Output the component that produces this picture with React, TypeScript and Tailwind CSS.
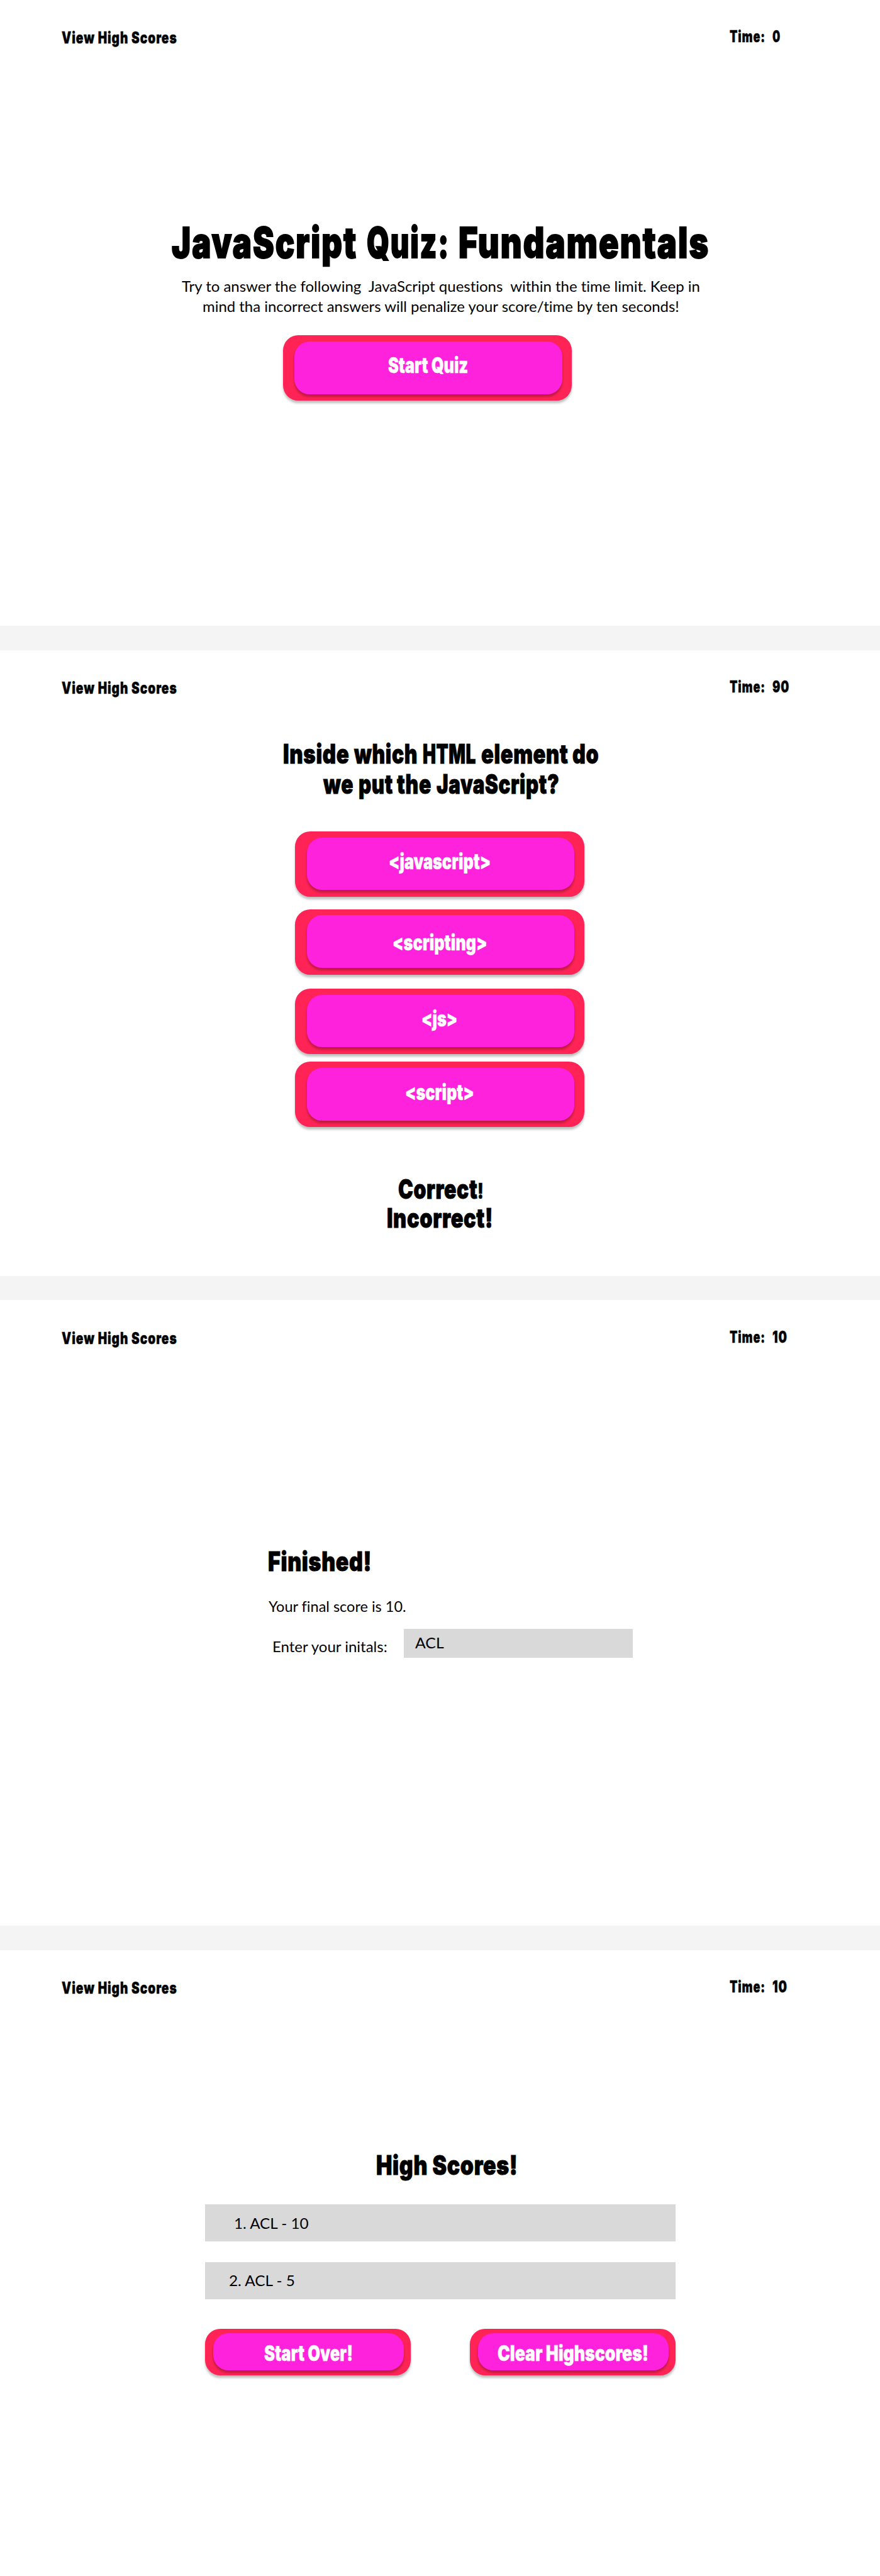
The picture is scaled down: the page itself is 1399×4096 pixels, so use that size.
import { useLayoutEffect, useRef } from 'react';
import type { ReactNode } from 'react';

/* One line of text, condensed horizontally so that it fills its box's width. */
function Fit({ className, children }: { className: string; children: ReactNode }) {
  const box = useRef<HTMLDivElement>(null);
  const line = useRef<HTMLSpanElement>(null);
  useLayoutEffect(() => {
    const outer = box.current;
    const inner = line.current;
    if (!outer || !inner) return;
    const fit = () => {
      inner.style.transform = 'none';
      const ratio = outer.getBoundingClientRect().width / inner.getBoundingClientRect().width;
      inner.style.transform = `scaleX(${ratio})`;
    };
    fit();
    const observer = new ResizeObserver(fit);
    observer.observe(outer);
    observer.observe(inner);
    return () => observer.disconnect();
  }, []);
  return (
    <div ref={box} className={`shrink-0 ${className}`}>
      <span ref={line} className="inline-block origin-left whitespace-pre align-top">
        {children}
      </span>
    </div>
  );
}

const heavy = "font-['Inter',sans-serif] font-black";
const h24 = `${heavy} h-[30px] text-[26px] leading-[30px] tracking-[0.05em] [-webkit-text-stroke:0.5px_currentColor]`;
const h32 = `${heavy} h-[36px] text-[34.8px] leading-[36px] [-webkit-text-stroke:0.5px_currentColor]`;
const h40 = `${heavy} h-[48px] text-[43.4px] leading-[48px] tracking-[0.02em] [-webkit-text-stroke:1px_currentColor]`;
const h64 = `${heavy} h-[70px] text-[69.5px] leading-[70px] tracking-[0.04em] [-webkit-text-stroke:2px_currentColor]`;
const body = "font-['Lato',sans-serif] h-[33px] text-[23.6px] leading-[32px] [font-variant-ligatures:none]";

function Frame({ time, timeWidth, children }: { time: string; timeWidth: string; children: ReactNode }) {
  return (
    <section className="flex h-[1024px] flex-col bg-white">
      <header className="flex h-[90px] shrink-0 items-start pl-[101px]">
        <Fit className={`mt-[47.5px] w-[189px] ${h24}`}>View High Scores</Fit>
        <Fit className={`ml-[904px] mt-[45.5px] w-[58.5px] ${h24}`}>Time:</Fit>
        <Fit className={`ml-[11.5px] mt-[45.5px] ${timeWidth} ${h24}`}>{time}</Fit>
      </header>
      {children}
    </section>
  );
}

function BigButton({ className, label, children }: { className: string; label: string; children: string }) {
  return (
    <button className={`flex h-[107px] w-[473px] shrink-0 items-start rounded-[25px] bg-[#ff2356] pl-[19px] pt-[10px] text-left shadow-[0_4px_4px_rgba(0,0,0,0.25)] ${className}`}>
      <div className="flex h-[86px] w-[438px] items-start rounded-[25px] bg-[#ff22dc] text-white shadow-[0_4px_4px_rgba(0,0,0,0.25)]">
        <Fit className={`${h32} ${label}`}>{children}</Fit>
      </div>
    </button>
  );
}

function SmallButton({ label, children }: { label: string; children: string }) {
  return (
    <button className="flex h-[76px] w-[336px] items-start rounded-[25px] bg-[#ff2356] pl-[13px] pt-[7px] text-left shadow-[0_4px_4px_rgba(0,0,0,0.25)]">
      <div className="flex h-[61px] w-[312px] items-start rounded-[25px] bg-[#ff22dc] text-white shadow-[0_4px_4px_rgba(0,0,0,0.25)]">
        <Fit className={`mt-[15.5px] ${h32} ${label}`}>{children}</Fit>
      </div>
    </button>
  );
}

export default function App() {
  return (
    <main className="flex w-[1440px] flex-col gap-[40px] bg-[#f4f4f4] text-black [zoom:0.97153]">
      <Frame time="0" timeWidth="w-[13.5px]">
        <h1 className="ml-[281px] mt-[272.5px] flex">
          <Fit className={`w-[304px] ${h64}`}>JavaScript</Fit>
          <Fit className={`ml-[15.5px] w-[136px] ${h64}`}>Quiz:</Fit>
          <Fit className={`ml-[14px] w-[411px] ${h64}`}>Fundamentals</Fit>
        </h1>
        <div className="mt-[20px] flex flex-col">
          <Fit className={`ml-[297px] w-[848px] ${body}`}>{'Try to answer the following  JavaScript questions  within the time limit. Keep in'}</Fit>
          <Fit className={`ml-[331px] w-[780px] ${body}`}>mind tha incorrect answers will penalize your score/time by ten seconds!</Fit>
        </div>
        <BigButton className="ml-[463px] mt-[30.5px]" label="ml-[153px] mt-[21.8px] w-[131px]">Start Quiz</BigButton>
      </Frame>

      <Frame time="90" timeWidth="w-[28px]">
        <h2 className="ml-[463px] mt-[56.5px] flex">
          <Fit className={`w-[108.5px] ${h40}`}>Inside</Fit>
          <Fit className={`ml-[8px] w-[104px] ${h40}`}>which</Fit>
          <Fit className={`ml-[8px] w-[87.5px] ${h40}`}>HTML</Fit>
          <Fit className={`ml-[8px] w-[142.5px] ${h40}`}>element</Fit>
          <Fit className={`ml-[7px] w-[43.5px] ${h40}`}>do</Fit>
        </h2>
        <h2 className="ml-[529px] mt-[1px] flex">
          <Fit className={`w-[49.5px] ${h40}`}>we</Fit>
          <Fit className={`ml-[8px] w-[56.5px] ${h40}`}>put</Fit>
          <Fit className={`ml-[7px] w-[56.5px] ${h40}`}>the</Fit>
          <Fit className={`ml-[7.5px] w-[201px] ${h40}`}>JavaScript?</Fit>
        </h2>
        <div className="ml-[483px] mt-[53.5px] flex flex-col">
          <BigButton className="" label="ml-[134px] mt-[21.4px] w-[167px]">{'<javascript>'}</BigButton>
          <BigButton className="mt-[20px]" label="ml-[140px] mt-[28px] w-[155px]">{'<scripting>'}</BigButton>
          <BigButton className="mt-[23px]" label="ml-[188px] mt-[21.7px] w-[59px]">{'<js>'}</BigButton>
          <BigButton className="mt-[13px]" label="ml-[161px] mt-[22px] w-[113px]">{'<script>'}</BigButton>
        </div>
        <div className="ml-[652px] mt-[78px] flex">
          <Fit className={`w-[130px] ${h40}`}>Correct</Fit>
          <Fit className={`-ml-[0.5px] mt-[9.5px] w-[10px] ${h32}`}>!</Fit>
        </div>
        <Fit className={`ml-[633px] -mt-[0.7px] w-[174px] ${h40}`}>Incorrect!</Fit>
      </Frame>

      <Frame time="10" timeWidth="w-[24.5px]">
        <Fit className={`ml-[438.5px] mt-[314.3px] w-[170px] ${h40}`}>Finished!</Fit>
        <Fit className={`ml-[439px] mt-[33.2px] w-[225px] ${body}`}>Your final score is 10.</Fit>
        <div className="ml-[446px] mt-[19.5px] flex items-start">
          <Fit className={`mt-[13.2px] w-[188px] ${body}`}>Enter your initals:</Fit>
          <div className="ml-[27px] flex h-[47px] w-[375px] bg-[#d9d9d9] pl-[18px] pt-[7px]">
            <Fit className={`w-[47px] ${body}`}>ACL</Fit>
          </div>
        </div>
      </Frame>

      <Frame time="10" timeWidth="w-[24.5px]">
        <Fit className={`ml-[616px] mt-[238.2px] w-[232px] ${h40}`}>High Scores!</Fit>
        <div className="ml-[336px] mt-[39.8px] flex w-[769px] flex-col gap-[33px]">
          <div className="h-[61px] bg-[#d9d9d9] pl-[47px] pt-[15px]">
            <Fit className={`w-[122px] ${body}`}>1. ACL - 10</Fit>
          </div>
          <div className="h-[61px] bg-[#d9d9d9] pl-[39px] pt-[15px]">
            <Fit className={`w-[108px] ${body}`}>2. ACL - 5</Fit>
          </div>
        </div>
        <div className="ml-[336px] mt-[49px] flex w-[769px] justify-between">
          <SmallButton label="ml-[83px] w-[145px]">Start Over!</SmallButton>
          <SmallButton label="ml-[32px] w-[247px]">Clear Highscores!</SmallButton>
        </div>
      </Frame>
    </main>
  );
}
